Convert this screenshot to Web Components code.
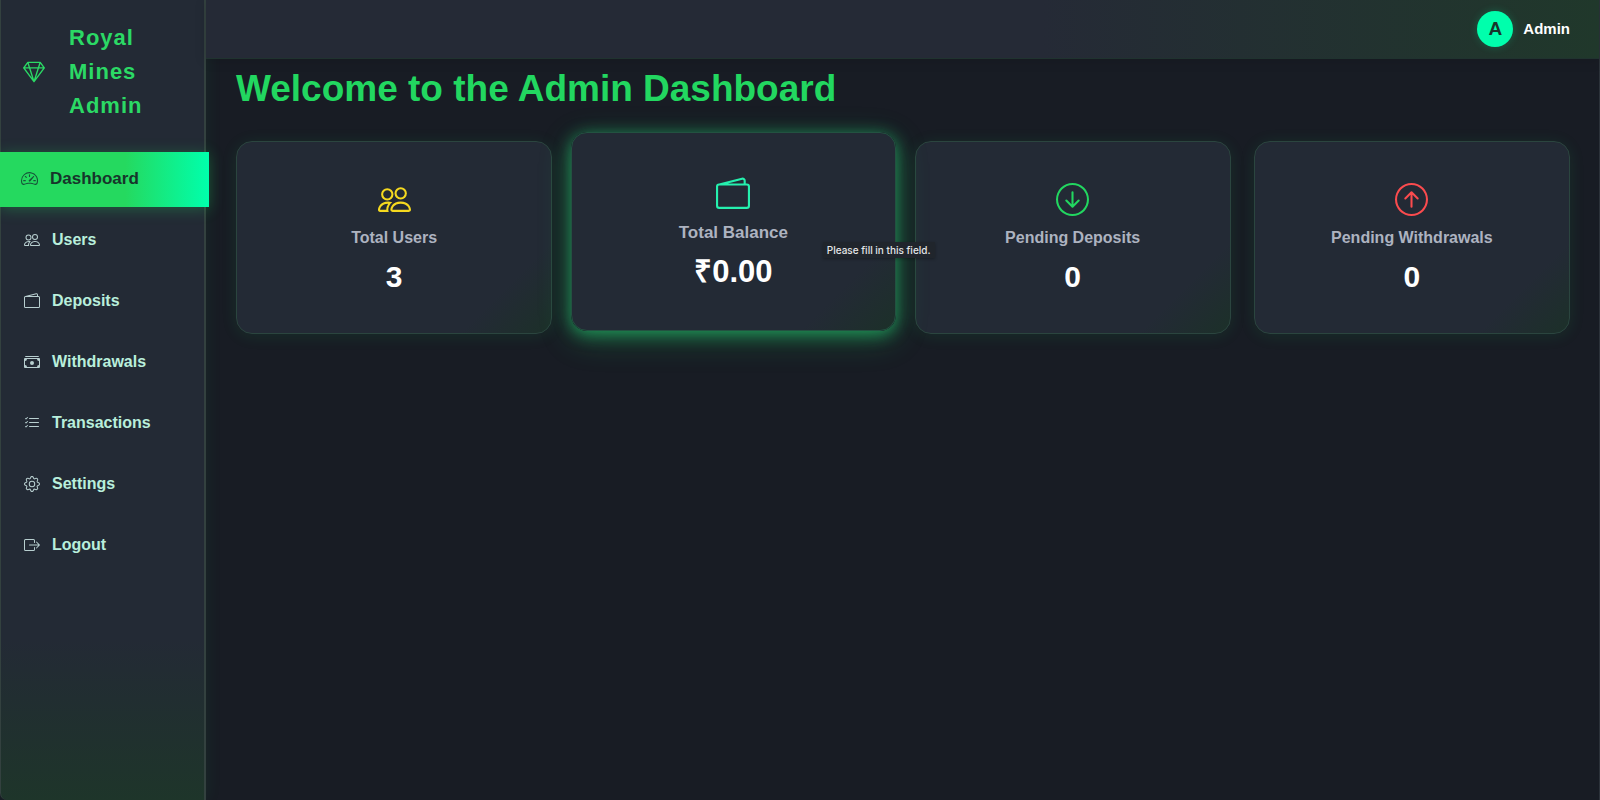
<!DOCTYPE html>
<html lang="en">
<head>
<meta charset="utf-8">
<title>Royal Mines Admin</title>
<style>
  html, body { margin: 0; min-height: 100%; background: #181c24; }
  body { font-family: "Liberation Sans", Arial, sans-serif; font-weight: 700; color: #fff; }
</style>
</head>
<body>
<admin-shell>
  <side-bar slot="sidebar">
    <brand-mark slot="brand">Royal Mines Admin</brand-mark>
    <nav-item icon="speedometer" active>Dashboard</nav-item>
    <nav-item icon="people">Users</nav-item>
    <nav-item icon="wallet">Deposits</nav-item>
    <nav-item icon="cash">Withdrawals</nav-item>
    <nav-item icon="list">Transactions</nav-item>
    <nav-item icon="gear">Settings</nav-item>
    <nav-item icon="logout">Logout</nav-item>
  </side-bar>
  <top-bar slot="header"><user-chip initial="A">Admin</user-chip></top-bar>
  <page-title>Welcome to the Admin Dashboard</page-title>
  <card-grid>
    <stat-card icon="people" label="Total Users" style="--tone:#f5d91f">3</stat-card>
    <stat-card icon="wallet" label="Total Balance" raised style="--tone:#25f0ae">₹0.00<hint-tip slot="tip">Please fill in this field.</hint-tip></stat-card>
    <stat-card icon="down" label="Pending Deposits" style="--tone:#22d760">0</stat-card>
    <stat-card icon="up" label="Pending Withdrawals" style="--tone:#fb4b4e">0</stat-card>
  </card-grid>
</admin-shell>
<script>
const ICONS = {
  gem: '<path d="M3.1.7a.5.5 0 0 1 .4-.2h9a.5.5 0 0 1 .4.2l2.976 3.974c.149.185.156.45.01.644L8.4 15.3a.5.5 0 0 1-.8 0L.1 5.3a.5.5 0 0 1 0-.6l3-4zm11.386 3.785-1.806-2.41-.776 2.413 2.582-.003zm-3.633.004.961-2.989H4.186l.963 2.995 5.704-.006zM5.47 5.495 8 13.366l2.532-7.876-5.062.005zm-1.371-.999-.78-2.422-1.818 2.425 2.598-.003zM1.499 5.5l5.113 6.817-2.192-6.82L1.5 5.5zm7.889 6.817 5.123-6.83-2.928.002-2.195 6.828z"/>',
  speedometer: '<path d="M8 4a.5.5 0 0 1 .5.5V6a.5.5 0 0 1-1 0V4.5A.5.5 0 0 1 8 4zM3.732 5.732a.5.5 0 0 1 .707 0l.915.914a.5.5 0 1 1-.708.708l-.914-.915a.5.5 0 0 1 0-.707zM2 10a.5.5 0 0 1 .5-.5h1.586a.5.5 0 0 1 0 1H2.5A.5.5 0 0 1 2 10zm9.5 0a.5.5 0 0 1 .5-.5h1.5a.5.5 0 0 1 0 1H12a.5.5 0 0 1-.5-.5zm.754-4.246a.389.389 0 0 0-.527-.02L7.547 9.31a.91.91 0 1 0 1.302 1.258l3.434-4.297a.389.389 0 0 0-.029-.518z"/><path fill-rule="evenodd" d="M0 10a8 8 0 1 1 15.547 2.661c-.442 1.253-1.845 1.602-2.932 1.25C11.309 13.488 9.475 13 8 13c-1.474 0-3.31.488-4.615.911-1.087.352-2.49.003-2.932-1.25A7.988 7.988 0 0 1 0 10zm8-7a7 7 0 0 0-6.603 9.329c.203.575.923.876 1.68.63C4.397 12.533 6.358 12 8 12s3.604.532 4.923.96c.757.245 1.477-.056 1.68-.631A7 7 0 0 0 8 3z"/>',
  people: '<path d="M15 14s1 0 1-1-1-4-5-4-5 3-5 4 1 1 1 1h8Zm-7.978-1A.261.261 0 0 1 7 12.996c.001-.264.167-1.03.76-1.72C8.312 10.629 9.282 10 11 10c1.717 0 2.687.63 3.24 1.276.593.69.758 1.457.76 1.72l-.008.002a.274.274 0 0 1-.014.002H7.022ZM11 7a2 2 0 1 0 0-4 2 2 0 0 0 0 4Zm3-2a3 3 0 1 1-6 0 3 3 0 0 1 6 0ZM6.936 9.28a5.88 5.88 0 0 0-1.23-.247A7.35 7.35 0 0 0 5 9c-4 0-5 3-5 4 0 .667.333 1 1 1h4.216A2.238 2.238 0 0 1 5 13c0-1.01.377-2.042 1.09-2.904.243-.294.526-.569.846-.816ZM4.92 10A5.493 5.493 0 0 0 4 13H1c0-.26.164-1.03.76-1.724.545-.636 1.492-1.256 3.16-1.275ZM1.5 5.5a3 3 0 1 1 6 0 3 3 0 0 1-6 0Zm3-2a2 2 0 1 0 0 4 2 2 0 0 0 0-4Z"/>',
  wallet: '<path d="M12.136.326A1.5 1.5 0 0 1 14 1.78V3h.5A1.5 1.5 0 0 1 16 4.5v9a1.5 1.5 0 0 1-1.5 1.5h-13A1.5 1.5 0 0 1 0 13.5v-9a1.5 1.5 0 0 1 1.432-1.499L12.136.326zM5.562 3H13V1.78a.5.5 0 0 0-.621-.484L5.562 3zM1.5 4a.5.5 0 0 0-.5.5v9a.5.5 0 0 0 .5.5h13a.5.5 0 0 0 .5-.5v-9a.5.5 0 0 0-.5-.5h-13z"/>',
  cash: '<path d="M1 3a1 1 0 0 1 1-1h12a1 1 0 0 1 1 1H1zm7 8a2 2 0 1 0 0-4 2 2 0 0 0 0 4z"/><path d="M0 5a1 1 0 0 1 1-1h14a1 1 0 0 1 1 1v8a1 1 0 0 1-1 1H1a1 1 0 0 1-1-1V5zm3 0a2 2 0 0 1-2 2v4a2 2 0 0 1 2 2h10a2 2 0 0 1 2-2V7a2 2 0 0 1-2-2H3z"/>',
  list: '<path fill-rule="evenodd" d="M5 11.5a.5.5 0 0 1 .5-.5h9a.5.5 0 0 1 0 1h-9a.5.5 0 0 1-.5-.5zm0-4a.5.5 0 0 1 .5-.5h9a.5.5 0 0 1 0 1h-9a.5.5 0 0 1-.5-.5zm0-4a.5.5 0 0 1 .5-.5h9a.5.5 0 0 1 0 1h-9a.5.5 0 0 1-.5-.5zM3.854 2.146a.5.5 0 0 1 0 .708l-1.5 1.5a.5.5 0 0 1-.708 0l-.5-.5a.5.5 0 1 1 .708-.708L2 3.293l1.146-1.147a.5.5 0 0 1 .708 0zm0 4a.5.5 0 0 1 0 .708l-1.5 1.5a.5.5 0 0 1-.708 0l-.5-.5a.5.5 0 1 1 .708-.708L2 7.293l1.146-1.147a.5.5 0 0 1 .708 0zm0 4a.5.5 0 0 1 0 .708l-1.5 1.5a.5.5 0 0 1-.708 0l-.5-.5a.5.5 0 0 1 .708-.708l.146.147 1.146-1.147a.5.5 0 0 1 .708 0z"/>',
  gear: '<path d="M8 4.754a3.246 3.246 0 1 0 0 6.492 3.246 3.246 0 0 0 0-6.492zM5.754 8a2.246 2.246 0 1 1 4.492 0 2.246 2.246 0 0 1-4.492 0z"/><path d="M9.796 1.343c-.527-1.79-3.065-1.79-3.592 0l-.094.319a.873.873 0 0 1-1.255.52l-.292-.16c-1.64-.892-3.433.902-2.54 2.541l.159.292a.873.873 0 0 1-.52 1.255l-.319.094c-1.79.527-1.79 3.065 0 3.592l.319.094a.873.873 0 0 1 .52 1.255l-.16.292c-.892 1.64.901 3.434 2.541 2.54l.292-.159a.873.873 0 0 1 1.255.52l.094.319c.527 1.79 3.065 1.79 3.592 0l.094-.319a.873.873 0 0 1 1.255-.52l.292.16c1.64.893 3.434-.902 2.54-2.541l-.159-.292a.873.873 0 0 1 .52-1.255l.319-.094c1.79-.527 1.79-3.065 0-3.592l-.319-.094a.873.873 0 0 1-.52-1.255l.16-.292c.893-1.64-.902-3.433-2.541-2.54l-.292.159a.873.873 0 0 1-1.255-.52l-.094-.319zm-2.633.283c.246-.835 1.428-.835 1.674 0l.094.319a1.873 1.873 0 0 0 2.693 1.115l.291-.16c.764-.415 1.6.42 1.184 1.185l-.159.292a1.873 1.873 0 0 0 1.116 2.692l.318.094c.835.246.835 1.428 0 1.674l-.319.094a1.873 1.873 0 0 0-1.115 2.693l.16.291c.415.764-.42 1.6-1.185 1.184l-.291-.159a1.873 1.873 0 0 0-2.693 1.116l-.094.318c-.246.835-1.428.835-1.674 0l-.094-.319a1.873 1.873 0 0 0-2.692-1.115l-.292.16c-.764.415-1.6-.42-1.184-1.185l.159-.291A1.873 1.873 0 0 0 1.945 8.93l-.319-.094c-.835-.246-.835-1.428 0-1.674l.319-.094A1.873 1.873 0 0 0 3.06 4.377l-.16-.292c-.415-.764.42-1.6 1.185-1.184l.292.159a1.873 1.873 0 0 0 2.692-1.115l.094-.319z"/>',
  logout: '<path fill-rule="evenodd" d="M10 12.5a.5.5 0 0 1-.5.5h-8a.5.5 0 0 1-.5-.5v-9a.5.5 0 0 1 .5-.5h8a.5.5 0 0 1 .5.5v2a.5.5 0 0 0 1 0v-2A1.5 1.5 0 0 0 9.5 2h-8A1.5 1.5 0 0 0 0 3.5v9A1.5 1.5 0 0 0 1.5 14h8a1.5 1.5 0 0 0 1.5-1.5v-2a.5.5 0 0 0-1 0v2z"/><path fill-rule="evenodd" d="M15.854 8.354a.5.5 0 0 0 0-.708l-3-3a.5.5 0 0 0-.708.708L14.293 7.5H5.5a.5.5 0 0 0 0 1h8.793l-2.147 2.146a.5.5 0 0 0 .708.708l3-3z"/>',
  down: '<path fill-rule="evenodd" d="M1 8a7 7 0 1 0 14 0A7 7 0 0 0 1 8zm15 0A8 8 0 1 1 0 8a8 8 0 0 1 16 0zM8.5 4.5a.5.5 0 0 0-1 0v5.793L5.354 8.146a.5.5 0 1 0-.708.708l3 3a.5.5 0 0 0 .708 0l3-3a.5.5 0 0 0-.708-.708L8.5 10.293V4.5z"/>',
  up: '<path fill-rule="evenodd" d="M1 8a7 7 0 1 0 14 0A7 7 0 0 0 1 8zm15 0A8 8 0 1 1 0 8a8 8 0 0 1 16 0zm-7.5 3.5a.5.5 0 0 1-1 0V5.707L5.354 7.854a.5.5 0 1 1-.708-.708l3-3a.5.5 0 0 1 .708 0l3 3a.5.5 0 0 1-.708.708L8.5 5.707V11.5z"/>'
};
const svg = name => `<svg viewBox="0 0 16 16" fill="currentColor" aria-hidden="true">${ICONS[name] || ''}</svg>`;

const define = (tag, render) => customElements.define(tag, class extends HTMLElement {
  connectedCallback() {
    if (!this.shadowRoot) this.attachShadow({ mode: 'open' }).innerHTML = render(this);
  }
});

define('admin-shell', () => `
<style>
  :host { display: grid; grid-template-columns: 206px minmax(0, 1fr); min-height: 100vh; box-sizing: border-box; border-right: 1px solid #2c323a; }
  .column { display: flex; flex-direction: column; min-width: 0; }
  main { padding: 8px 29px 32px 30px; }
  ::slotted([slot=sidebar]) { position: relative; z-index: 1; }
  ::slotted([slot=header]) { position: relative; z-index: 2; }
</style>
<slot name="sidebar"></slot>
<div class="column"><slot name="header"></slot><main><slot></slot></main></div>`);

define('side-bar', () => `
<style>
  :host { display: flex; flex-direction: column; box-sizing: border-box; border: solid #33413f; border-width: 0 2px 0 1px; border-bottom-left-radius: 7px;
    background: linear-gradient(180deg, #232a35 80%, #1e352a); box-shadow: 2px 0 16px rgba(34, 215, 96, .06); }
  nav { display: flex; flex-direction: column; gap: 6px; }
</style>
<slot name="brand"></slot>
<nav aria-label="Main"><slot></slot></nav>`);

define('brand-mark', () => `
<style>
  :host { display: flex; align-items: center; gap: 24px; padding: 21px 22px 29px; color: #2bd965; font-size: 22px; line-height: 34px; letter-spacing: 1px; }
  svg { width: 22px; height: 22px; flex: none; }
  span { width: 80px; }
</style>
${svg('gem')}<span><slot></slot></span>`);

define('nav-item', el => `
<style>
  :host { display: block; }
  a { display: flex; align-items: center; gap: 12px; height: 55px; box-sizing: border-box; padding: 0 0 2px 23px; color: #b9efdc; font-size: 16px; text-decoration: none; }
  svg { width: 16px; height: 16px; flex: none; color: #b8cfd0; }
  :host([active]) a { margin: 0 -5px 0 -1px; padding-left: 21px; color: #17352b; font-size: 17px;
    background: linear-gradient(90deg, #25d95f 60%, #00ffac); box-shadow: 0 2px 14px rgba(34, 215, 96, .3); }
  :host([active]) svg { width: 17px; height: 17px; color: #17523a; }
</style>
<a href="#"${el.hasAttribute('active') ? ' aria-current="page"' : ''}>${svg(el.getAttribute('icon'))}<span><slot></slot></span></a>`);

define('top-bar', () => `
<style>
  :host { display: flex; justify-content: flex-end; align-items: center; height: 58px; padding: 0 29px 0 32px; border-bottom: 1px solid #20332f;
    background: linear-gradient(90deg, #252a36 60%, #20382b); box-shadow: 0 2px 12px rgba(0, 0, 0, .12); }
</style>
<slot></slot>`);

define('user-chip', el => `
<style>
  :host { display: flex; align-items: center; gap: 10px; font-size: 15px; }
  .name { padding-bottom: 2px; }
  .avatar { display: grid; place-items: center; width: 36px; height: 36px; border-radius: 50%; background: #00ffac; color: #17352b; font-size: 19px; box-shadow: 0 0 8px rgba(0, 255, 172, .2); }
</style>
<span class="avatar">${el.getAttribute('initial')}</span><span class="name"><slot></slot></span>`);

define('page-title', () => `
<style>
  :host { display: block; }
  h1 { margin: 0 0 30px; color: #22d760; font-size: 37px; line-height: 44px; }
</style>
<h1><slot></slot></h1>`);

define('card-grid', () => `
<style>
  :host { display: grid; grid-template-columns: repeat(auto-fit, minmax(240px, 1fr)); gap: 23px; }
</style>
<slot></slot>`);

define('stat-card', el => `
<style>
  :host { position: relative; display: flex; flex-direction: column; align-items: center; justify-content: center; padding: 41px 16px 38px; text-align: center;
    border: 1px solid #2b453f; border-radius: 16px; background: linear-gradient(135deg, #232a35 82%, #1c3029); box-shadow: 0 2px 16px rgba(34, 215, 96, .1); }
  :host([raised]) { z-index: 1; margin: -9px -4px 3px; border-color: #235241;
    box-shadow: 0 8px 32px rgba(34, 215, 96, .28), 0 3px 16px rgba(38, 224, 130, .55); }
  svg { width: 33px; height: 33px; color: var(--tone); }
  h2 { margin: 10px 0 9px; color: #adb3c0; font-size: 16px; line-height: 24px; }
  .value { font-size: 30px; line-height: 36px; }
  :host([raised]) svg { width: 34px; height: 34px; }
  :host([raised]) h2 { font-size: 17px; }
  :host([raised]) .value { font-size: 31px; }
</style>
${svg(el.getAttribute('icon'))}
<h2>${el.getAttribute('label')}</h2>
<div class="value"><slot></slot></div>
<slot name="tip"></slot>`);

define('hint-tip', () => `
<style>
  :host { position: absolute; right: -40px; top: 109px; padding: 0 4px; background: #20252c; color: #e4e6e8; white-space: nowrap;
    font: 500 10px/16px Inter, "Open Sans", sans-serif; box-shadow: 0 1px 3px rgba(0, 0, 0, .3); }
</style>
<span role="tooltip"><slot></slot></span>`);
</script>
</body>
</html>
